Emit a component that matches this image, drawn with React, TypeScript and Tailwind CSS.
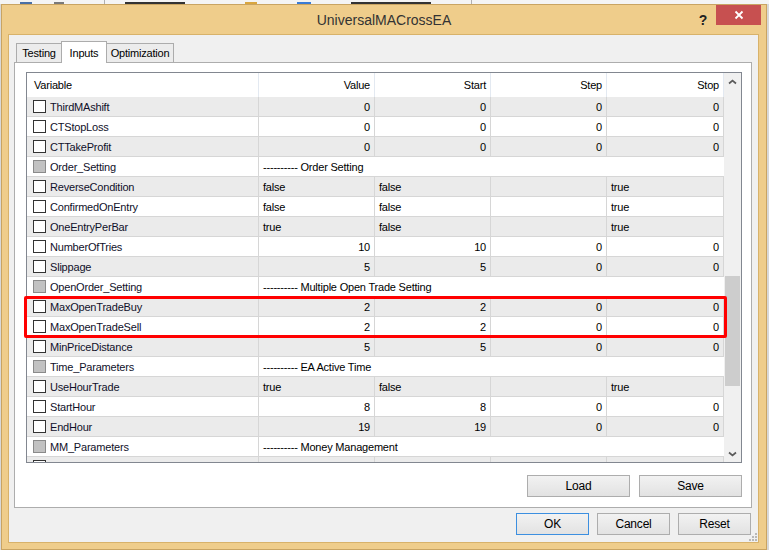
import React from "react";

type Row =
  | { kind: "num"; name: string; v: string[] }
  | { kind: "bool"; name: string; v: string[] }
  | { kind: "group"; name: string; label: string };

const rows: Row[] = [
  { kind: "num", name: "ThirdMAshift", v: ["0", "0", "0", "0"] },
  { kind: "num", name: "CTStopLoss", v: ["0", "0", "0", "0"] },
  { kind: "num", name: "CTTakeProfit", v: ["0", "0", "0", "0"] },
  { kind: "group", name: "Order_Setting", label: "---------- Order Setting" },
  { kind: "bool", name: "ReverseCondition", v: ["false", "false", "", "true"] },
  { kind: "bool", name: "ConfirmedOnEntry", v: ["false", "false", "", "true"] },
  { kind: "bool", name: "OneEntryPerBar", v: ["true", "false", "", "true"] },
  { kind: "num", name: "NumberOfTries", v: ["10", "10", "0", "0"] },
  { kind: "num", name: "Slippage", v: ["5", "5", "0", "0"] },
  { kind: "group", name: "OpenOrder_Setting", label: "---------- Multiple Open Trade Setting" },
  { kind: "num", name: "MaxOpenTradeBuy", v: ["2", "2", "0", "0"] },
  { kind: "num", name: "MaxOpenTradeSell", v: ["2", "2", "0", "0"] },
  { kind: "num", name: "MinPriceDistance", v: ["5", "5", "0", "0"] },
  { kind: "group", name: "Time_Parameters", label: "---------- EA Active Time" },
  { kind: "bool", name: "UseHourTrade", v: ["true", "false", "", "true"] },
  { kind: "num", name: "StartHour", v: ["8", "8", "0", "0"] },
  { kind: "num", name: "EndHour", v: ["19", "19", "0", "0"] },
  { kind: "group", name: "MM_Parameters", label: "---------- Money Management" },
  { kind: "num", name: "Lots", v: ["1.0", "1.0", "0.0", "0.0"] },
];

function Check({ group }: { group?: boolean }) {
  return (
    <span
      className={
        group
          ? "w-[13px] h-[13px] shrink-0 border border-[#8a8a8a] bg-[#c2c2c2]"
          : "w-[13px] h-[13px] shrink-0 border border-[#333] bg-white"
      }
    />
  );
}

function Chevron({ down }: { down?: boolean }) {
  return (
    <svg width="9" height="6" viewBox="0 0 9 6">
      <path
        d={down ? "M1 1.5 L4.5 4.5 L8 1.5" : "M1 4.5 L4.5 1.5 L8 4.5"}
        fill="none"
        stroke="#5a5a5a"
        strokeWidth="1.7"
      />
    </svg>
  );
}

function WinButton({ label, primary, w }: { label: string; primary?: boolean; w: string }) {
  return (
    <button
      className={`${w} h-[22px] text-[12px] text-black bg-gradient-to-b from-[#f2f2f2] to-[#e2e2e2] border ${
        primary ? "border-[#3c8fe0]" : "border-[#adadad]"
      }`}
    >
      {label}
    </button>
  );
}

export default function App() {
  return (
    <div className="w-[769px] h-[550px] overflow-hidden bg-[#d8d8d8] font-['Liberation_Sans',Arial,sans-serif] tracking-[-0.2px]">
      {/* background toolbar strip */}
      <div className="h-[4px] bg-[#f4f4f4] flex items-end">
        <div className="ml-[20px] w-[12px] h-[2px] bg-[#4a6fa5]" />
        <div className="ml-[22px] w-[10px] h-[2px] bg-[#7a7a7a]" />
        <div className="ml-[40px] w-px h-[4px] bg-[#b0b0b0]" />
        <div className="ml-[20px] w-[60px] h-[2px] bg-[#333]" />
        <div className="ml-[60px] w-[12px] h-[2px] bg-[#d9a640]" />
        <div className="ml-[40px] w-[14px] h-[2px] bg-[#3a7bd5]" />
        <div className="ml-[40px] w-[80px] h-[2px] bg-[#333]" />
        <div className="ml-[40px] w-px h-[4px] bg-[#b0b0b0]" />
      </div>

      {/* dialog window */}
      <div className="ml-[1px] w-[766px] h-[546px] border border-[#c9a462] bg-[#efcd8b] flex flex-col">
        {/* title bar */}
        <div className="relative h-[29px] shrink-0 flex items-center justify-center">
          <span className="text-[14px] text-[#333] tracking-normal pt-[2px]">UniversalMACrossEA</span>
          <span className="absolute right-[59px] top-[5px] text-[14px] font-bold text-[#222]">?</span>
          <div className="absolute right-[5px] top-0 w-[45px] h-[20px] bg-[#c75050] flex items-center justify-center">
            <svg width="10" height="10" viewBox="0 0 10 10">
              <path d="M1.5 1.5 L8.5 8.5 M8.5 1.5 L1.5 8.5" stroke="#fff" strokeWidth="1.8" />
            </svg>
          </div>
        </div>

        {/* client area */}
        <div className="relative ml-[6px] w-[751px] h-[509px] border border-[#d8b26a] bg-[#f0f0f0] px-[5px] pt-[6px] flex flex-col">
          {/* tabs */}
          <div className="flex items-end h-[21px] pl-[2px] text-[11px] text-black">
            <div className="w-[46px] h-[19px] bg-[#ececec] border border-b-0 border-[#acacac] flex items-center justify-center">
              Testing
            </div>
            <div className="relative z-10 -ml-px w-[46px] h-[22px] -mb-px bg-white border border-b-0 border-[#acacac] flex items-start justify-center pt-[3px]">
              Inputs
            </div>
            <div className="-ml-px w-[68px] h-[19px] bg-[#ececec] border border-b-0 border-[#acacac] flex items-center justify-center">
              Optimization
            </div>
          </div>

          {/* tab page */}
          <div className="w-[738px] h-[446px] bg-white border border-[#adadad] pl-[11px] pt-[9px] pr-[9px] flex flex-col">
            <div className="relative w-[716px] h-[391px]">
              <div className="w-full h-full border border-[#828790] flex overflow-hidden">
                <div className="w-[697px] shrink-0 flex flex-col text-[11px] text-black">
                  {/* header */}
                  <div className="grid grid-cols-[232px_116px_116px_116px_117px] h-[24px] shrink-0 bg-white">
                    <div className="border-r border-[#e3e9f1] pl-[7px] pt-px flex items-center">Variable</div>
                    <div className="border-r border-[#e3e9f1] pr-[4px] pt-px flex items-center justify-end">Value</div>
                    <div className="border-r border-[#e3e9f1] pr-[4px] pt-px flex items-center justify-end">Start</div>
                    <div className="border-r border-[#e3e9f1] pr-[4px] pt-px flex items-center justify-end">Step</div>
                    <div className="border-r border-[#e3e9f1] pr-[4px] pt-px flex items-center justify-end">Stop</div>
                  </div>
                  {/* rows */}
                  {rows.map((r, i) => {
                    const bg = i % 2 === 0 ? "bg-[#ebebeb]" : "bg-white";
                    return (
                      <div
                        key={r.name}
                        className={`grid grid-cols-[232px_116px_116px_116px_117px] h-[20px] shrink-0 ${bg}`}
                      >
                        <div className="border-r border-b border-[#d6d6d6] pl-[6px] flex items-center gap-[4px]">
                          <Check group={r.kind === "group"} />
                          <span className="text-[#10102a] pt-px">{r.name}</span>
                        </div>
                        {r.kind === "group" ? (
                          <div className="col-span-4 border-b border-[#d6d6d6] pl-[4px] pt-px flex items-center text-black">
                            {r.label}
                          </div>
                        ) : (
                          r.v.map((val, j) => (
                            <div
                              key={j}
                              className={`border-r border-b border-[#d6d6d6] pt-px flex items-center text-black ${
                                r.kind === "num" ? "justify-end pr-[4px]" : "justify-start pl-[4px]"
                              }`}
                            >
                              <span className="text-black">{val}</span>
                            </div>
                          ))
                        )}
                      </div>
                    );
                  })}
                </div>
                {/* scrollbar */}
                <div className="w-[17px] shrink-0 bg-[#f0f0f0] flex flex-col">
                  <div className="h-[17px] flex items-center justify-center">
                    <Chevron />
                  </div>
                  <div className="flex-1">
                    <div className="mt-[186px] mx-px h-[110px] bg-[#cdcdcd]" />
                  </div>
                  <div className="h-[17px] flex items-center justify-center">
                    <Chevron down />
                  </div>
                </div>
              </div>
              {/* highlight overlay */}
              <div className="absolute left-[-2px] top-[224px] w-[703px] h-[42px] border-[3px] border-[#ff0000] rounded-[2px] pointer-events-none" />
            </div>

            <div className="mt-[12px] flex justify-end gap-[9px]">
              <WinButton label="Load" w="w-[103px]" />
              <WinButton label="Save" w="w-[103px]" />
            </div>
          </div>

          {/* dialog buttons */}
          <div className="mt-[5px] pr-[2px] flex justify-end gap-[8px]">
            <WinButton label="OK" primary w="w-[73px]" />
            <WinButton label="Cancel" w="w-[73px]" />
            <WinButton label="Reset" w="w-[73px]" />
          </div>

          {/* size grip */}
          <svg className="absolute right-[1px] bottom-[1px]" width="8" height="8" viewBox="0 0 8 8">
            <rect x="6" y="0" width="2" height="2" fill="#b8b8b8" />
            <rect x="3" y="3" width="2" height="2" fill="#b8b8b8" />
            <rect x="6" y="3" width="2" height="2" fill="#b8b8b8" />
            <rect x="0" y="6" width="2" height="2" fill="#b8b8b8" />
            <rect x="3" y="6" width="2" height="2" fill="#b8b8b8" />
            <rect x="6" y="6" width="2" height="2" fill="#b8b8b8" />
          </svg>
        </div>
      </div>
    </div>
  );
}
